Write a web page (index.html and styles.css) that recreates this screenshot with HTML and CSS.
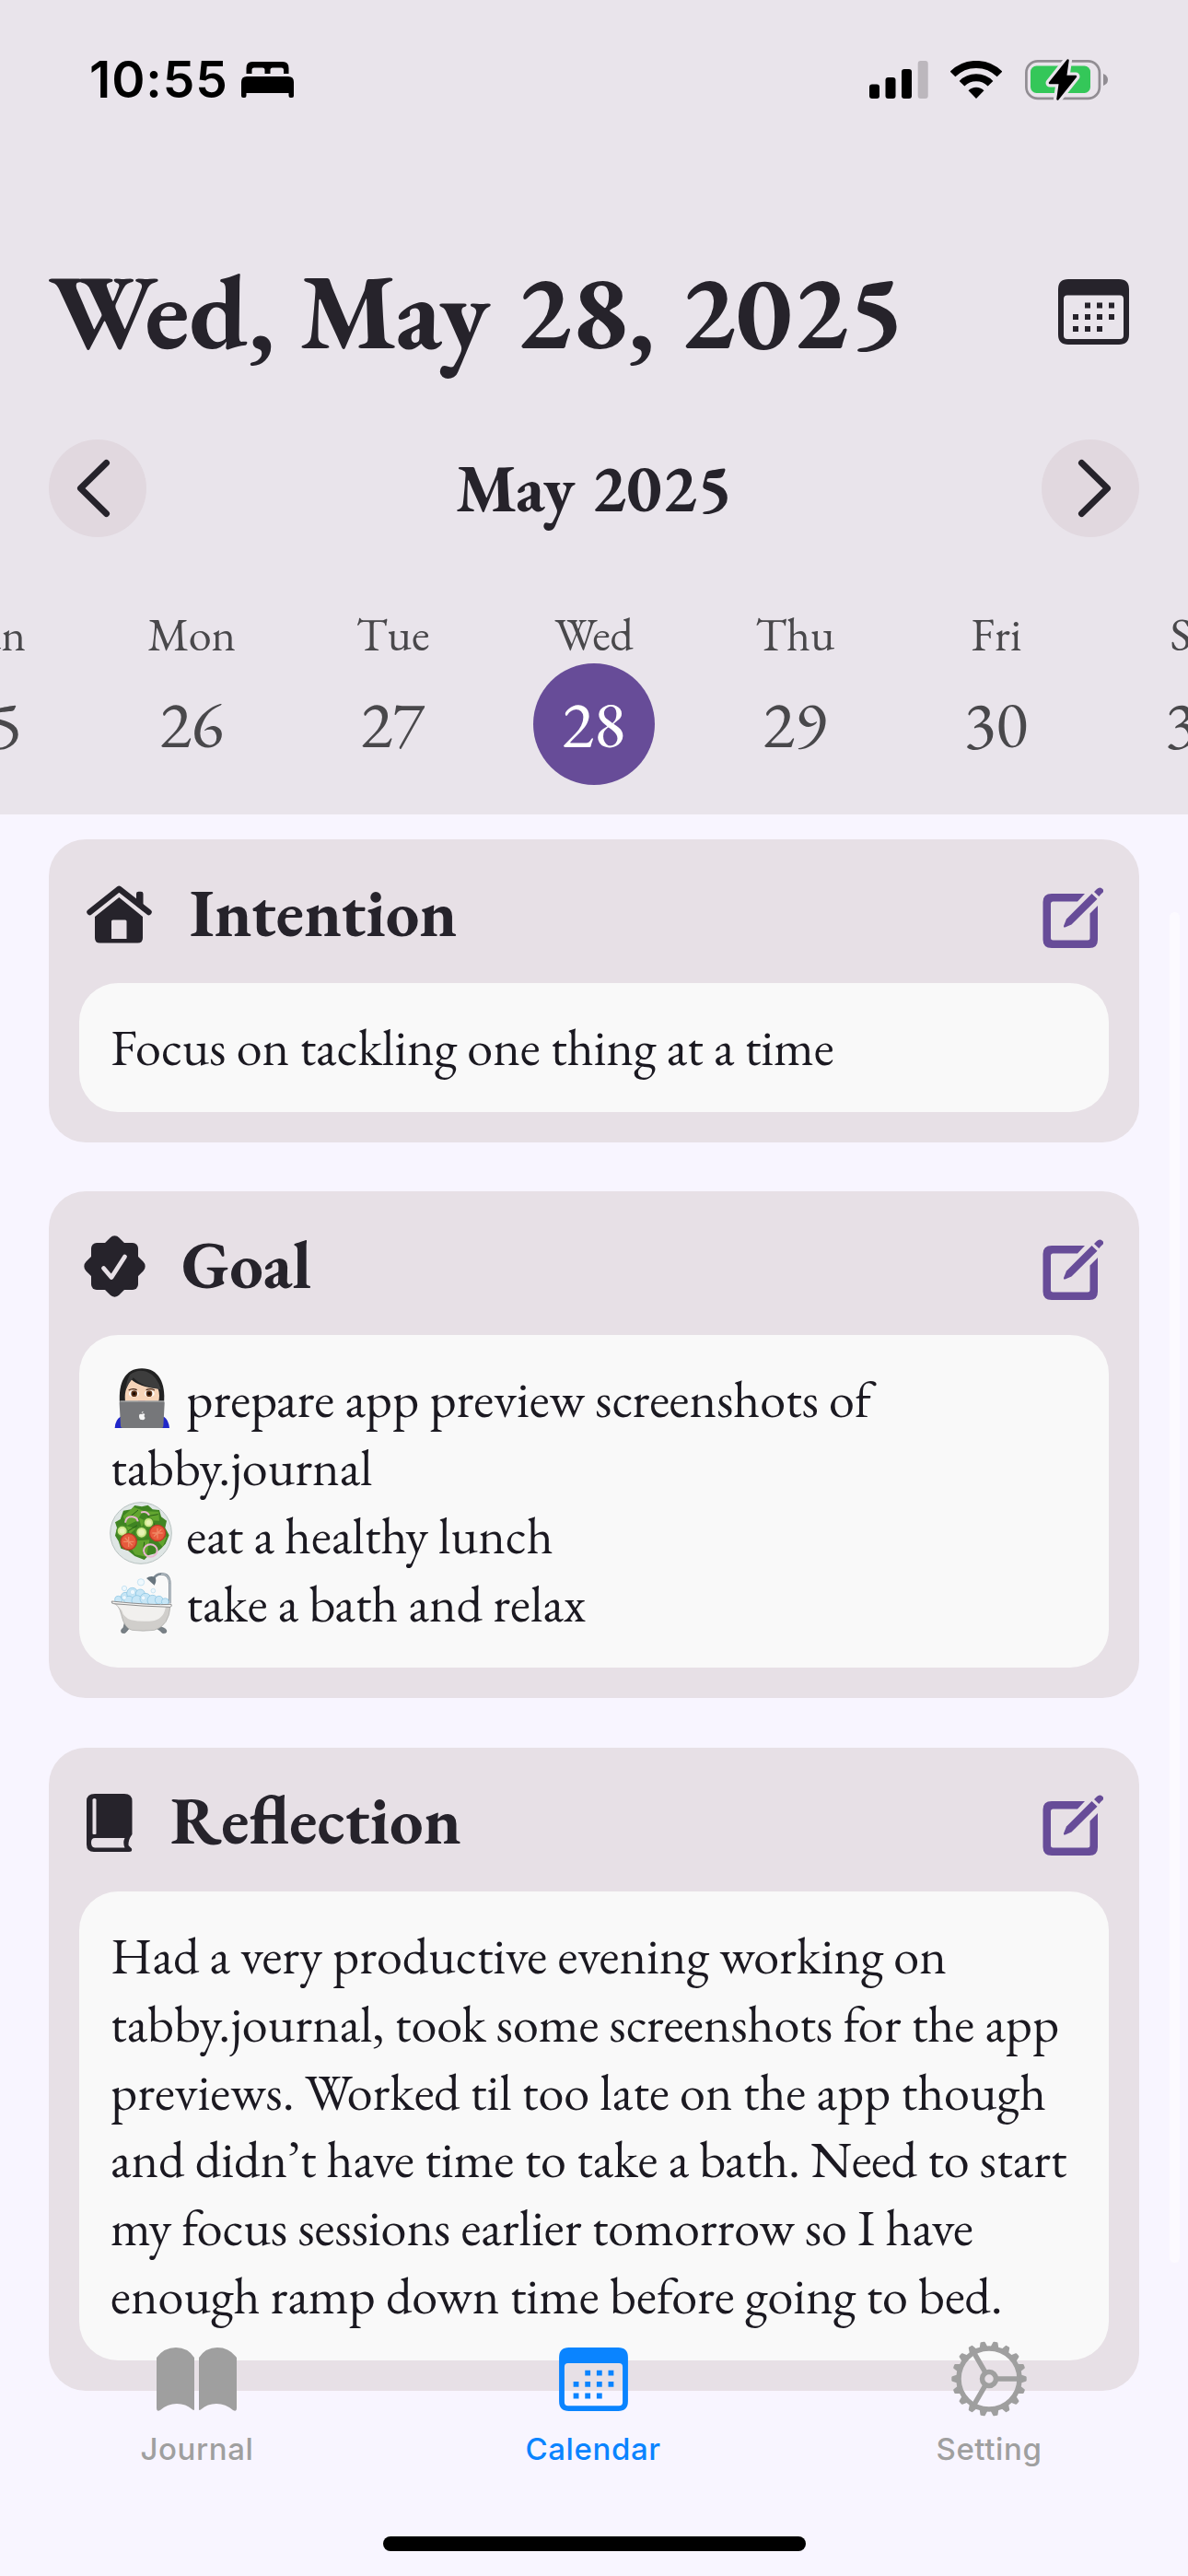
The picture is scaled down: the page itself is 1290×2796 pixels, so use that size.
FILE: index.html
```html
<!DOCTYPE html>
<html lang="en">
<head>
<meta charset="utf-8">
<title>Calendar</title>
<link rel="stylesheet" href="styles.css">
</head>
<body>
<svg class="defs" aria-hidden="true">
  <symbol id="calendar" viewBox="0 0 77 71">
    <path fill-rule="evenodd" d="M11 0H66Q77 0 77 11V60Q77 71 66 71H11Q0 71 0 60V11Q0 0 11 0ZM10 17.5Q6 17.5 6 21.500V61Q6 65 10 65H67Q71 65 71 61V21.500Q71 17.500 67 17.500Z"/>
    <path d="M29 25.500h6v6h-6zM42 25.500h6v6h-6zM55 25.500h6v6h-6zM16 38h6v6h-6zM29 38h6v6h-6zM42 38h6v6h-6zM55 38h6v6h-6zM16 51h6v6h-6zM29 51h6v6h-6zM42 51h6v6h-6z"/>
  </symbol>
  <symbol id="edit" viewBox="0 0 66 67">
    <path d="M46 7H10Q.5 7 .5 16V57Q.5 66 10 66H51Q60 66 60 57V20L51.500 28.500V55Q51.500 57.500 49 57.500H11.500Q9 57.500 9 55V18Q9 15.500 11.500 15.500H38Z"/>
    <path d="M53.500 7L59.500 12.700L31.500 40.500L24.500 43.500Q22.500 44 23 42L26 34.500Z"/>
    <path d="M56 5L59 2Q62-1 65 1.700T64 7L61.300 10Z"/>
  </symbol>
</svg>
<div class="screen">
  <header class="header">
    <div class="status">
      <span class="time">10:55</span>
      <svg class="bed" viewBox="0 0 57 39"><path d="M5.500 13V7Q5.500 0 12 0H45Q51.500 0 51.500 7V13H46V9Q46 6.500 43.500 6.500H34Q31.500 6.500 31.500 9V13H25.500V9Q25.500 6.500 23 6.500H14Q11.500 6.500 11.500 9V13ZM0 37V22Q0 16 6 16H51Q57 16 57 22V37Q57 39 55 39H53.500Q51.500 39 51.500 37V34H5.500V37Q5.500 39 3.500 39H2Q0 39 0 37Z"/></svg>
      <svg class="signal" viewBox="0 0 64 41"><rect y="25.500" width="11" height="15.500" rx="3"/><rect x="17.500" y="18" width="11" height="23" rx="3"/><rect x="35" y="9" width="11" height="32" rx="3"/><rect class="dim" x="52.700" width="11" height="41" rx="3"/></svg>
      <svg class="wifi" viewBox="0 0 56 41"><path class="arc" d="M2.500 14.500A36 36 0 0 1 53.500 14.500M12.500 24.800A21.800 21.800 0 0 1 43.500 24.800"/><path d="M19.500 32.300A12 12 0 0 1 36.500 32.300L28 41Z"/></svg>
      <svg class="battery" viewBox="0 0 91 45"><rect class="shell" x="1.400" y="2.400" width="79.500" height="40.500" rx="12.500"/><rect class="charge" x="6" y="7.500" width="65" height="29.500" rx="6.500"/><path class="nub" d="M85 16Q90 18 90 22.500T85 29Z"/><path class="bolt-gap" d="M46.500 1.500L44 19H55L35.500 43.500L38 26H27Z"/><path class="bolt" d="M46.500 1.500L44 19H55L35.500 43.500L38 26H27Z"/></svg>
    </div>
    <div class="title-row">
      <h1 class="title">Wed, May 28, 2025</h1>
      <svg class="title-icon"><use href="#calendar"/></svg>
    </div>
    <div class="month-row">
      <span class="round"><svg viewBox="0 0 106 106"><path d="M62.500 25.500L34.500 53L62.500 80.500"/></svg></span>
      <h2 class="month">May 2025</h2>
      <span class="round"><svg viewBox="0 0 106 106"><path d="M43.500 25.500L71.500 53L43.500 80.500"/></svg></span>
    </div>
    <div class="week">
      <div class="day"><span class="name">Sun</span><span class="num">25</span></div>
      <div class="day"><span class="name">Mon</span><span class="num">26</span></div>
      <div class="day"><span class="name">Tue</span><span class="num">27</span></div>
      <div class="day"><span class="name">Wed</span><span class="num selected">28</span></div>
      <div class="day"><span class="name">Thu</span><span class="num">29</span></div>
      <div class="day"><span class="name">Fri</span><span class="num">30</span></div>
      <div class="day"><span class="name">Sat</span><span class="num">31</span></div>
    </div>
  </header>

  <main class="cards">
    <section class="card">
      <div class="card-head">
        <svg class="house" viewBox="0 0 71 63"><path class="roof" d="M3.500 29L35.300 3.800L67.500 29"/><path d="M54 22V9Q54 6.700 56.500 6.700H59Q61.500 6.700 61.500 9V28ZM35.300 13L61 34V57Q61 62.500 55.500 62.500H14.500Q9 62.500 9 57V34ZM28.500 37.500Q27 37.500 27 39V58H43.500V39Q43.500 37.500 42 37.500Z" fill-rule="evenodd"/></svg>
        <h3>Intention</h3>
        <svg class="edit"><use href="#edit"/></svg>
      </div>
      <p class="note"><span>Focus on tackling one thing at a time</span></p>
    </section>

    <section class="card">
      <div class="card-head">
        <svg class="badge" viewBox="0 0 67 67"><rect x="8" y="8" width="51" height="51" rx="6"/><rect x="8" y="8" width="51" height="51" rx="7" transform="rotate(45 33.500 33.500)"/><path class="tick" d="M21.500 35.500L30 45.500L44.500 23"/></svg>
        <h3>Goal</h3>
        <svg class="edit"><use href="#edit"/></svg>
      </div>
      <p class="note">
        <span><svg class="emoji" viewBox="30 18 204 204"><path fill="#222" d="M63 135C58 70 80 22 135 22S213 70 207 135Z"/><path fill="#f7d4b8" d="M82 135C77 105 82 85 100 57Q125 82 188 88Q196 112 188 135Z"/><path fill="#3d3d3d" d="M96 43Q85 62 82 92Q92 70 107 52Q135 83 197 91Q186 46 150 32Q120 23 96 43Z"/><ellipse cx="109" cy="104" rx="16" ry="11" fill="#fff"/><ellipse cx="160" cy="104" rx="16" ry="11" fill="#fff"/><circle cx="110" cy="104" r="10" fill="#5d3217"/><circle cx="159" cy="104" r="10" fill="#5d3217"/><circle cx="110" cy="104" r="5" fill="#160903"/><circle cx="159" cy="104" r="5" fill="#160903"/><path d="M92 93Q105 85 119 92M149 92Q163 85 177 93" fill="none" stroke="#442719" stroke-width="4"/><path fill="#eaa9a2" d="M123 126h23v4h-23z"/><path fill="#2027c9" d="M47 216Q49 188 65 179H207Q222 188 225 216Z"/><path fill="#76777a" d="M67 129H204Q210 129 209 136L205 210Q205 216 199 216H72Q66 216 66 210L62 136Q61 129 67 129Z"/><path fill="#a2a3a5" d="M64 127h143v4H64z"/><path fill="#f5f5f5" d="M135 171Q142 166 145 172Q140 177 146 183Q141 193 135 188Q130 191 127 184Q123 168 135 171ZM134 168Q134 162 140 161Q140 167 134 168Z"/></svg> prepare app preview screenshots of</span>
        <span>tabby.journal</span>
        <span><svg class="emoji salad" viewBox="30 453 204 204"><circle cx="132" cy="555" r="100" fill="#dfe6e5" stroke="#b8c2c1" stroke-width="3"/><path fill="#3f8422" d="M65 510L75 482 100 478 112 465 135 469 155 464 170 478 192 480 198 502 216 515 211 538 224 562 212 590 198 605 178 622 158 627 143 642 112 630 91 613 67 605 59 581 48 563 54 538 48 520Z"/><g fill="#62a52f"><path d="M74 500L108 470 140 482 118 515 87 530ZM146 484L190 485 192 515 168 514ZM120 580L160 577 150 632 113 625 100 604ZM84 532L116 540 96 558ZM187 582L217 565 203 600ZM125 505L147 515 134 536Z"/></g><g fill="none" stroke="#285f17" stroke-width="3"><path d="M86 511L123 480M154 500L188 494M139 621L143 584M87 550L120 530M176 523L170 540"/></g><g stroke="#4e932a" stroke-width="4" fill="#cfe88c"><circle cx="71" cy="548" r="17"/><circle cx="157" cy="521" r="16"/><circle cx="134" cy="553" r="18"/></g><g fill="#e6f3b5"><circle cx="71" cy="548" r="9"/><circle cx="157" cy="521" r="8"/><circle cx="134" cy="553" r="10"/></g><g fill="#e75b3d" stroke="#be3928" stroke-width="4"><circle cx="92" cy="583" r="26"/><circle cx="186" cy="555" r="26"/></g><path d="M75 583H109M92 567V600M80 571L104 595M169 555H203M186 539V572M174 566L199 543" stroke="#f08a66" stroke-width="4"/><g fill="none" stroke="#e9b8d0" stroke-width="6"><path d="M81 521Q84 500 104 502Q120 504 122 517M132 488Q150 482 159 497"/><ellipse cx="163" cy="612" rx="22" ry="20"/></g></svg> eat a healthy lunch</span>
        <span><svg class="emoji" viewBox="30 676 204 204"><g fill="#788086" stroke="#646b70" stroke-width="2"><path d="M79 842L75 858Q64 863 69 874Q80 880 86 870L101 851ZM185 842L200 857Q220 862 214 874Q202 880 197 870L171 851Z"/></g><path fill="none" stroke="#7d8993" stroke-width="8" d="M226 779V714Q225 682 198 683Q180 684 174 698"/><path fill="none" stroke="#ccd4d9" stroke-width="3" d="M226 778V714Q225 682 198 683"/><path fill="#68757e" d="M150 697Q164 686 178 694Q185 704 176 720Z"/><g fill="#c7e6f6" stroke="#82bfdf" stroke-width="2"><circle cx="59" cy="767" r="12"/><circle cx="81" cy="757" r="14"/><circle cx="104" cy="746" r="18"/><circle cx="130" cy="748" r="15"/><circle cx="93" cy="771" r="16"/><circle cx="119" cy="770" r="17"/><circle cx="147" cy="764" r="18"/><circle cx="170" cy="769" r="17"/><circle cx="191" cy="768" r="13"/><circle cx="211" cy="774" r="12"/></g><g fill="#eff8fd" stroke="#b3d9ed" stroke-width="2"><circle cx="132" cy="710" r="11"/><circle cx="78" cy="730" r="8"/><circle cx="172" cy="738" r="7"/><circle cx="105" cy="742" r="8"/><circle cx="140" cy="761" r="7"/><circle cx="78" cy="760" r="7"/></g><path fill="#d0cecb" stroke="#a5a4a2" stroke-width="2" d="M38 778Q60 779 68 815Q78 861 103 866Q139 871 176 866Q224 852 228 787Z"/><path fill="#f1f0ee" d="M54 784H213Q211 825 176 835Q137 841 99 833Q75 824 70 803Z"/><path fill="#f7f6f4" stroke="#8f8f8f" stroke-width="3" d="M37 772Q34 778 44 780Q140 789 228 791Q234 788 231 782Q170 786 37 772Z"/></svg> take a bath and relax</span>
      </p>
    </section>

    <section class="card">
      <div class="card-head">
        <svg class="book" viewBox="0 0 50 63"><path fill-rule="evenodd" d="M9 0H41Q49.500 0 49.500 8V44Q45 50 45.500 56L49 59.500Q50 63 46 63H8Q0 63 0 55V8Q0 0 9 0ZM6.500 6V43.500Q8.500 44.500 10.500 43.500V6Q8.500 4 6.500 6ZM9 48Q5 48 5 53T9 58.500H41.500Q39 53 41.500 48Z"/></svg>
        <h3>Reflection</h3>
        <svg class="edit"><use href="#edit"/></svg>
      </div>
      <p class="note">
        <span>Had a very productive evening working on</span>
        <span>tabby.journal, took some screenshots for the app</span>
        <span>previews. Worked til too late on the app though</span>
        <span>and didn’t have time to take a bath. Need to start</span>
        <span>my focus sessions earlier tomorrow so I have</span>
        <span>enough ramp down time before going to bed.</span>
      </p>
    </section>
  </main>

  <div class="scrollbar"></div>
  <nav class="tabs">
    <div class="tab"><span class="tab-icon"><svg class="open-book" viewBox="0 0 88 69"><path d="M0 11Q8 0 21 0T41 11V67Q41 69 38.500 67Q32 61 22 61T4 68Q0 70 0 66ZM46 11Q53 0 66 0T87 11V66Q87 70 83 68Q75 61 65 61T48.500 67Q46 69 46 67Z"/></svg></span><span>Journal</span></div>
    <div class="tab active"><span class="tab-icon"><svg class="tab-calendar"><use href="#calendar"/></svg></span><span>Calendar</span></div>
    <div class="tab"><span class="tab-icon"><svg class="gear" viewBox="-42 -42 84 84"><circle r="33" /><circle r="7.500"/><path d="M8 0H32M-4 -6.900L-16-27.700M-4 6.900L-16 27.700"/><g class="teeth"><path id="t" d="M-3-35L-1.500-39.500H1.500L3-35Z" transform="rotate(90)"/><use href="#t" transform="rotate(20)"/><use href="#t" transform="rotate(40)"/><use href="#t" transform="rotate(60)"/><use href="#t" transform="rotate(80)"/><use href="#t" transform="rotate(100)"/><use href="#t" transform="rotate(120)"/><use href="#t" transform="rotate(140)"/><use href="#t" transform="rotate(160)"/><use href="#t" transform="rotate(180)"/><use href="#t" transform="rotate(200)"/><use href="#t" transform="rotate(220)"/><use href="#t" transform="rotate(240)"/><use href="#t" transform="rotate(260)"/><use href="#t" transform="rotate(280)"/><use href="#t" transform="rotate(300)"/><use href="#t" transform="rotate(320)"/><use href="#t" transform="rotate(340)"/></g></svg></span><span>Setting</span></div>
  </nav>
  <div class="home-indicator"></div>
</div>
</body>
</html>
```
FILE: styles.css
```css
* { box-sizing: border-box; margin: 0; padding: 0; }
body { background: #f8f5ff; }
svg { display: block; flex: none; }
.defs { position: absolute; width: 0; height: 0; }

.screen {
  position: relative;
  width: 1290px;
  height: 2796px;
  overflow: hidden;
  background: #f8f5ff;
  color: #26232b;
  font-family: "EB Garamond", "Liberation Serif", serif;
}

/* Header */
.header { height: 884px; background: #e9e4eb; overflow: hidden; }
.status { display: flex; align-items: center; height: 172px; padding: 0 86px 0 97px; color: #000; }
.time { width: 165px; font: 600 55px/60px Inter, sans-serif; letter-spacing: 0.9px; }
.bed { width: 57px; height: 39px; }
.signal { width: 64px; height: 41px; margin-left: auto; }
.signal .dim { fill: #bcb7bd; }
.wifi { width: 56px; height: 41px; margin-left: 24px; }
.wifi .arc { fill: none; stroke: #000; stroke-width: 8; }
.battery { width: 91px; height: 45px; margin-left: 25px; }
.shell { fill: none; stroke: #918d93; stroke-width: 2.7; }
.charge { fill: #34c759; }
.nub { fill: #918d93; }
.bolt-gap { fill: #e9e4eb; stroke: #e9e4eb; stroke-width: 9; stroke-linejoin: round; }
.bolt { stroke: #000; stroke-width: 2.5; stroke-linejoin: round; }

.title-row {
  display: flex;
  align-items: center;
  justify-content: space-between;
  height: 120px;
  margin-top: 108px;
  padding: 0 64px 0 53px;
}
.title { padding-bottom: 6px; font-size: 115.6px; line-height: 114px; font-weight: 700; white-space: nowrap; }
.title-icon { width: 77px; height: 71px; margin-bottom: 3px; fill: #26232b; }

.month-row {
  display: flex;
  align-items: center;
  justify-content: space-between;
  height: 106px;
  margin-top: 77px;
  padding: 0 53px;
}
.round { width: 106px; height: 106px; border-radius: 50%; background: #e1d8df; }
.round path { fill: none; stroke: #26232b; stroke-width: 7; stroke-linecap: round; stroke-linejoin: round; }
.month { padding-bottom: 1px; font-size: 72.6px; line-height: 80px; }

.week { display: flex; justify-content: center; margin-top: 75px; }
.day { display: flex; flex: none; flex-direction: column; align-items: center; gap: 2px; width: 218.4px; color: #49484b; }
.name { font-size: 50.3px; line-height: 60px; }
.num { width: 132px; height: 132px; padding-right: 1px; border-radius: 50%; font-size: 72.5px; line-height: 131px; text-align: center; }
.num.selected { background: #674c98; color: #fff; }

/* Journal cards */
.cards { display: flex; flex-direction: column; gap: 53.5px; padding: 27px 53px 0; }
.card { padding: 0 33px 33px; border-radius: 40px; background: #e7e0e6; }
.card-head { display: flex; align-items: center; height: 156px; padding: 6px 6px 0 8px; }
.card-head h3 { flex: 1; padding-bottom: 3px; font-size: 72.7px; line-height: 80px; }
.house, .badge, .book { fill: #26232b; }
.house { width: 71px; height: 63px; margin-right: 41px; }
.roof { fill: none; stroke: #26232b; stroke-width: 6.5; stroke-linecap: round; stroke-linejoin: round; }
.badge { width: 67px; height: 67px; margin: 0 39px 0 -3px; }
.tick { fill: none; stroke: #e7e0e6; stroke-width: 4.8; stroke-linecap: round; stroke-linejoin: round; }
.book { width: 50px; height: 63px; margin: 2px 41px 0 0; }
.edit { width: 66px; height: 67px; margin-top: 8px; fill: #674c98; }

.note { padding: 33px 30px 33px 34px; border-radius: 42px; background: #f9f9f9; color: #1b1921; font-size: 56.2px; }
.note span { display: block; height: 73.8px; line-height: 73.8px; white-space: nowrap; }
.emoji { display: inline-block; width: 68px; height: 68px; margin: 0 4px 0 -1px; vertical-align: -14px; }
.emoji.salad { vertical-align: -12px; }

/* Elements floating over the scrolled cards */
.scrollbar { position: absolute; top: 990px; right: 9px; width: 11px; height: 1466px; border-radius: 6px; background: #fcfaff; }
.tabs { position: absolute; right: 1px; bottom: 0; left: -1px; display: flex; height: 256px; }
.tab {
  display: flex;
  flex: 1;
  flex-direction: column;
  align-items: center;
  color: #9f9f9f;
  font: 500 33px/40px Inter, sans-serif;
  letter-spacing: 0.6px;
}
.tab.active { color: #0a84ff; }
.tab-icon { display: flex; align-items: center; justify-content: center; height: 84px; margin-bottom: 14px; }
.tab-icon svg { fill: currentColor; }
.open-book { width: 88px; height: 69px; }
.tab-calendar { width: 75px; height: 69px; }
.tab-icon .gear { width: 84px; height: 84px; fill: none; stroke: currentColor; stroke-width: 5.5; }
.gear .teeth { fill: currentColor; stroke-width: 2.4; stroke-linejoin: round; }
.home-indicator { position: absolute; bottom: 27px; left: 416px; width: 459px; height: 16px; border-radius: 8px; background: #000; }
```
